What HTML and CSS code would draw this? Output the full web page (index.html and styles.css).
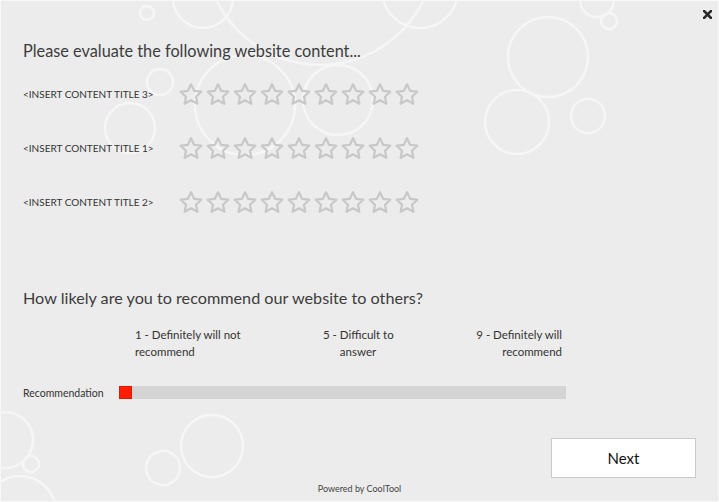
FILE: index.html
```html
<!DOCTYPE html>
<html lang="en">
<head>
<meta charset="utf-8">
<title>Survey</title>
<link rel="stylesheet" href="styles.css">
</head>
<body>
<div class="survey">
  <svg class="bg" width="719" height="502" viewBox="0 0 719 502" aria-hidden="true">
    <g fill="none" stroke="#f6f6f6" stroke-width="2.5">
      <circle cx="147" cy="13" r="7"/>
      <circle cx="203" cy="-2" r="30"/>
      <circle cx="320" cy="-50" r="115"/>
      <circle cx="420" cy="-10" r="38"/>
      <circle cx="160" cy="82" r="13"/>
      <circle cx="245" cy="105" r="50"/>
      <circle cx="338" cy="100" r="35"/>
      <circle cx="130" cy="128" r="25"/>
      <circle cx="548" cy="57" r="40"/>
      <circle cx="517" cy="122" r="32"/>
      <circle cx="588" cy="116" r="17"/>
      <circle cx="597" cy="0" r="17"/>
      <circle cx="609" cy="21" r="8"/>
      <circle cx="5" cy="440" r="28"/>
      <circle cx="31" cy="464" r="8"/>
      <circle cx="20" cy="512" r="36"/>
      <circle cx="163" cy="468" r="17"/>
      <circle cx="212" cy="446" r="31"/>
    </g>
    <defs>
      <symbol id="star" viewBox="0 0 26 24">
        <path d="M13 2.2l3.1 6.6 7.2.9-5.3 5 1.4 7.1L13 18.3l-6.4 3.5 1.4-7.1-5.3-5 7.2-.9z" fill="none" stroke="#c8c8c8" stroke-width="2.2" stroke-linejoin="round"/>
      </symbol>
    </defs>
  </svg>

  <button class="close" aria-label="Close">
    <svg width="9" height="9" viewBox="0 0 9 9"><path d="M1 1l7 7M8 1l-7 7" stroke="#2b2b2b" stroke-width="2.6" stroke-linecap="square"/></svg>
  </button>

  <h1 class="heading">Please evaluate the following website content...</h1>

  <div class="ratings">
    <div class="rating-row">
      <span class="rating-label">&lt;INSERT CONTENT TITLE 3&gt;</span>
      <div class="stars">
        <svg class="star"><use href="#star"/></svg><svg class="star"><use href="#star"/></svg><svg class="star"><use href="#star"/></svg><svg class="star"><use href="#star"/></svg><svg class="star"><use href="#star"/></svg><svg class="star"><use href="#star"/></svg><svg class="star"><use href="#star"/></svg><svg class="star"><use href="#star"/></svg><svg class="star"><use href="#star"/></svg>
      </div>
    </div>
    <div class="rating-row">
      <span class="rating-label">&lt;INSERT CONTENT TITLE 1&gt;</span>
      <div class="stars">
        <svg class="star"><use href="#star"/></svg><svg class="star"><use href="#star"/></svg><svg class="star"><use href="#star"/></svg><svg class="star"><use href="#star"/></svg><svg class="star"><use href="#star"/></svg><svg class="star"><use href="#star"/></svg><svg class="star"><use href="#star"/></svg><svg class="star"><use href="#star"/></svg><svg class="star"><use href="#star"/></svg>
      </div>
    </div>
    <div class="rating-row">
      <span class="rating-label">&lt;INSERT CONTENT TITLE 2&gt;</span>
      <div class="stars">
        <svg class="star"><use href="#star"/></svg><svg class="star"><use href="#star"/></svg><svg class="star"><use href="#star"/></svg><svg class="star"><use href="#star"/></svg><svg class="star"><use href="#star"/></svg><svg class="star"><use href="#star"/></svg><svg class="star"><use href="#star"/></svg><svg class="star"><use href="#star"/></svg><svg class="star"><use href="#star"/></svg>
      </div>
    </div>
  </div>

  <h2 class="heading heading-q2">How likely are you to recommend our website to others?</h2>

  <div class="scale-labels">
    <div class="scale-left">1 - Definitely will not<br>recommend</div>
    <div class="scale-mid">5 - Difficult to<br>answer</div>
    <div class="scale-right">9 - Definitely will<br>recommend</div>
  </div>

  <div class="slider-row">
    <span class="slider-label">Recommendation</span>
    <div class="track"><div class="handle"></div></div>
  </div>

  <div class="footer">
    <button class="next">Next</button>
  </div>
  <div class="powered">Powered by CoolTool</div>
</div>
</body>
</html>
```

FILE: styles.css
```css
* { box-sizing: border-box; }

html, body {
  margin: 0;
  padding: 0;
}

body {
  width: 719px;
  height: 502px;
  overflow: hidden;
  font-family: "Lato", "Open Sans", "DejaVu Sans", sans-serif;
  color: #404040;
}

.survey {
  position: relative;
  width: 719px;
  height: 502px;
  background: #ececec;
  border: 1px solid #f8f8f8;
  padding: 0 22px;
  display: flex;
  flex-direction: column;
}

.bg {
  position: absolute;
  left: -1px;
  top: -1px;
  z-index: 0;
}

.survey > *:not(.bg) {
  position: relative;
  z-index: 1;
}

.close {
  position: absolute !important;
  right: 6px;
  top: 9px;
  width: 9px;
  height: 9px;
  padding: 0;
  border: 0;
  background: none;
  line-height: 0;
}

.heading {
  margin: 40px 0 0;
  font-size: 16.3px;
  line-height: 20px;
  font-weight: 400;
  color: #3c3c3c;
}

.ratings {
  margin-top: 6px;
  display: flex;
  flex-direction: column;
}

.rating-row {
  height: 54px;
  display: flex;
  align-items: center;
}

.rating-label {
  width: 155px;
  font-size: 10px;
  color: #333;
}

.stars {
  display: flex;
  gap: 1px;
}

.star {
  width: 26px;
  height: 24px;
}

.heading-q2 {
  margin-top: 59px;
  font-size: 16.2px;
}

.scale-labels {
  margin-top: 18px;
  margin-left: 112px;
  width: 427px;
  display: grid;
  grid-template-columns: 188px 70px 1fr;
  font-size: 11.5px;
  line-height: 17px;
  color: #333;
}

.scale-mid {
  text-align: center;
  white-space: nowrap;
}

.scale-right {
  text-align: right;
}

.slider-row {
  margin-top: 26px;
  display: flex;
  align-items: center;
  height: 13px;
}

.slider-label {
  width: 96px;
  font-size: 10.5px;
  color: #333;
}

.track {
  width: 447px;
  height: 13px;
  background: #d4d4d4;
}

.handle {
  width: 13px;
  height: 13px;
  background: #ff1e00;
  border: 1px solid #e01800;
}

.footer {
  margin-top: 39px;
  display: flex;
  justify-content: flex-end;
}

.next {
  width: 145px;
  height: 40px;
  background: #fff;
  border: 1.5px solid #c9c9c9;
  font-family: inherit;
  font-size: 15px;
  color: #111;
  padding: 0;
}

.powered {
  margin-top: 5px;
  text-align: center;
  font-size: 9px;
  line-height: 12px;
  color: #444;
}
```
